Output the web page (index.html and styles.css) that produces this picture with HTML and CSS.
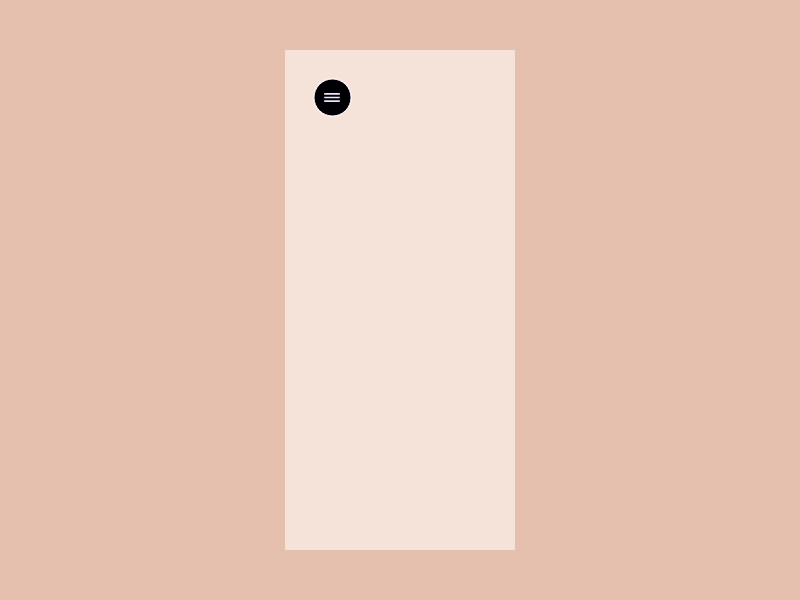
FILE: index.html
```html
<!DOCTYPE html>
<html lang="en">
<head>
    <meta charset="UTF-8">
    <meta name="viewport" content="width=device-width, initial-scale=1.0">
    <title>Menu</title>
    <link rel="stylesheet" href="styles.css">
</head>
<body>
    <main class="panel">
        <button class="menu-btn" type="button" aria-label="Open menu">
            <svg class="menu-icon" viewBox="0 0 37 37" aria-hidden="true">
                <circle cx="18.5" cy="18.5" r="18.5" />
                <path d="M10.2 14.9h15.6M10.2 18.5h15.6M10.2 22.1h15.6" />
            </svg>
        </button>
    </main>
</body>
</html>
```

FILE: styles.css
```css
* {
    box-sizing: border-box;
}

body {
    margin: 0;
    min-height: 100vh;
    padding: 50px 20px;
    display: flex;
    justify-content: center;
    background-color: #e5c0ae;
}

.panel {
    width: 100%;
    max-width: 230px;
    padding: 29px;
    background-color: #f5e3d9;
}

/* round menu button */
.menu-btn {
    display: block;
    width: 37px;
    height: 37px;
    padding: 0;
    border: none;
    border-radius: 50%;
    background: none;
    box-shadow: 0 0 0 1px #fff3f4;
    cursor: pointer;
}

.menu-icon {
    display: block;
    width: 100%;
    height: 100%;
    overflow: visible;
}

.menu-icon circle {
    fill: #000004;
    stroke: #fff3f8;
    stroke-width: 1;
}

.menu-icon path {
    fill: none;
    stroke: #eee4ff;
    stroke-width: 1.7;
}
```
